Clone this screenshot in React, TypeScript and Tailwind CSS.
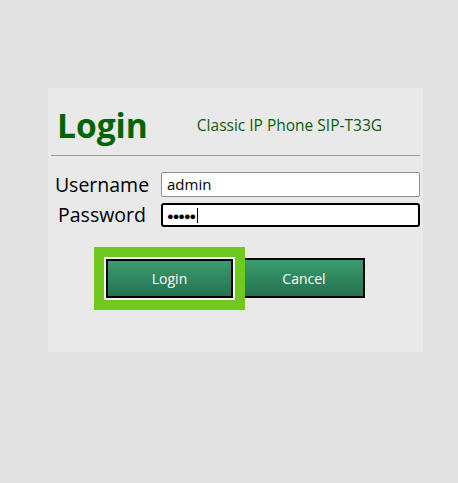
import React from "react";

const font = { fontFamily: '"Open Sans", "Noto Sans", sans-serif' };

function Field({ label, children }: { label: string; children: React.ReactNode }) {
  return (
    <div className="flex items-center">
      <span className="w-[98px] text-center text-[19.5px] leading-none text-black">{label}</span>
      {children}
    </div>
  );
}

export default function App() {
  return (
    <div className="min-h-[483px] w-[458px] bg-[#e1e1e1] pt-[88px] pl-[48px]" style={font}>
      <div className="flex h-[264px] w-[375px] flex-col bg-[#e9e9e9]">
        {/* header */}
        <div className="flex h-[54px] items-end pl-[9px]">
          <h1 className="text-[33.5px] leading-none font-bold text-[#006400]">Login</h1>
          <span className="mb-[9px] ml-[49px] text-[15.5px] leading-none text-[#0b5f0b]">
            Classic IP Phone SIP-T33G
          </span>
        </div>
        <div className="mx-[3px] mt-[13px] h-px bg-[#9c9c9c]" />

        {/* form */}
        <div className="mt-[16px] flex flex-col gap-[6px] pl-[5px]">
          <Field label="Username">
            <div className="ml-[10px] flex h-[25px] w-[259px] items-center rounded-[2px] border border-[#8f8f8f] bg-white pl-[5px] text-[15px] text-black">
              admin
            </div>
          </Field>
          <Field label="Password">
            <div className="ml-[10px] flex h-[24px] w-[259px] items-center rounded-[3px] border-2 border-black bg-white pl-[4px] text-black">
              <span className="text-[11px] leading-none tracking-[-1px]">●●●●●</span>
              <span className="ml-[2px] h-[15px] w-px bg-black" />
            </div>
          </Field>
        </div>

        {/* buttons */}
        <div className="mt-[31px] flex items-center pl-[58px]">
          <button className="relative z-10 flex h-[39px] w-[127px] items-center justify-center border-2 border-black bg-gradient-to-b from-[#3b9c70] to-[#257250] text-[14px] text-white shadow-[0_0_0_2px_#f4f4f4,0_0_0_12px_#6fc91f]">
            Login
          </button>
          <button className="ml-[10px] flex h-[40px] w-[122px] items-center justify-center border-2 border-black bg-gradient-to-b from-[#3b9c70] to-[#257250] text-[14px] text-white">
            Cancel
          </button>
        </div>
      </div>
    </div>
  );
}
